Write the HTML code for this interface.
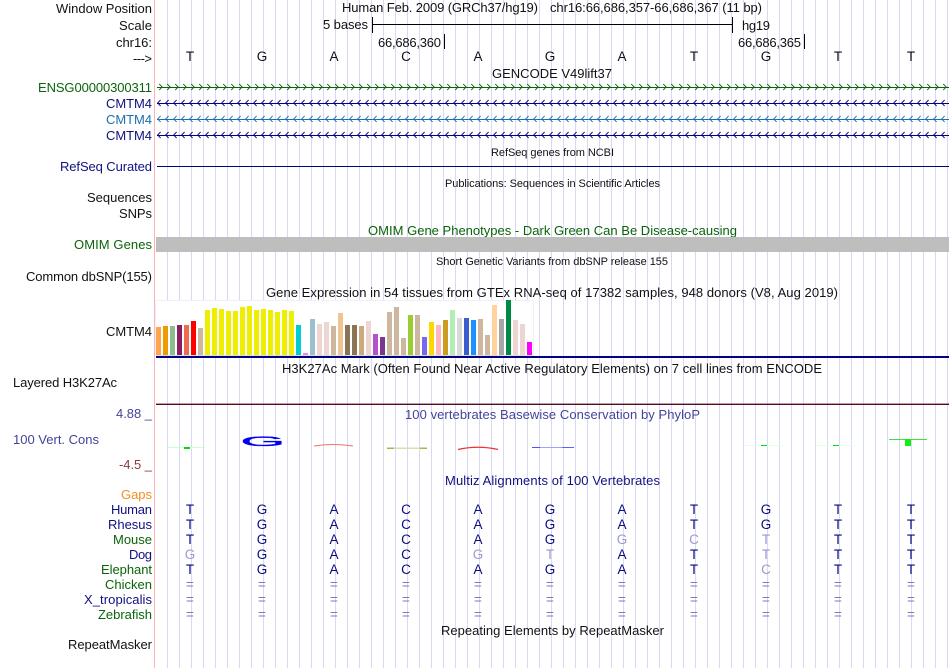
<!DOCTYPE html>
<html><head><meta charset="utf-8"><style>
html,body{margin:0;padding:0;background:#fff;width:950px;height:668px;overflow:hidden}
svg{display:block;font-family:"Liberation Sans",sans-serif;font-size:13px;fill:#111}
.e{text-anchor:end}
.m{text-anchor:middle;font-size:13.5px;fill:#111}
.n{fill:#101080}.g{fill:#0a640a}
.s{font-size:11px}
.b{text-anchor:middle;font-size:13.5px;fill:#0a0a80}
.l{text-anchor:middle;font-size:13.5px;fill:#9a9ac8}
.q{text-anchor:middle;font-size:13.5px;fill:#7a7ab8}
</style></head><body>
<svg xmlns="http://www.w3.org/2000/svg" width="950" height="668" viewBox="0 0 950 668">
<defs>
<pattern id="grid" patternUnits="userSpaceOnUse" x="155" y="0" width="12" height="10"><rect x="0" width="1" height="10" fill="#d8d8f8"/></pattern>
<pattern id="ar" patternUnits="userSpaceOnUse" x="159" y="83" width="8" height="8"><path d="M0.2 1L3.2 4L0.2 7" fill="none" stroke="#0a640a" stroke-width="0.9"/></pattern>
<pattern id="al1" patternUnits="userSpaceOnUse" x="157" y="99" width="8" height="8"><path d="M3.6 1L0.6 4L3.6 7" fill="none" stroke="#000080" stroke-width="0.9"/></pattern>
<pattern id="al2" patternUnits="userSpaceOnUse" x="157" y="115" width="8" height="8"><path d="M3.6 1L0.6 4L3.6 7" fill="none" stroke="#1a6fb0" stroke-width="0.9"/></pattern>
<pattern id="al3" patternUnits="userSpaceOnUse" x="157" y="131" width="8" height="8"><path d="M3.6 1L0.6 4L3.6 7" fill="none" stroke="#000080" stroke-width="0.9"/></pattern>
</defs>
<rect width="950" height="668" fill="#fff"/>
<rect x="167" y="0" width="783" height="668" fill="url(#grid)"/>
<rect x="154" y="0" width="1" height="668" fill="#ffb4b4"/>

<!-- left labels -->
<text x="152" y="13" class="e" textLength="96">Window Position</text>
<text x="152" y="30" class="e" textLength="33">Scale</text>
<text x="152" y="47" class="e" textLength="36">chr16:</text>
<text x="152" y="63" class="e" textLength="19">---&gt;</text>
<text x="152" y="92" class="e g" textLength="114">ENSG00000300311</text>
<text x="152" y="108" class="e n" textLength="46">CMTM4</text>
<text x="152" y="124" class="e" style="fill:#1a6fb0" textLength="46">CMTM4</text>
<text x="152" y="140" class="e n" textLength="46">CMTM4</text>
<text x="152" y="171" class="e n" textLength="92">RefSeq Curated</text>
<text x="152" y="202" class="e" textLength="65">Sequences</text>
<text x="152" y="218" class="e" textLength="33">SNPs</text>
<text x="152" y="249" class="e g" textLength="78">OMIM Genes</text>
<text x="152" y="281" class="e" textLength="126">Common dbSNP(155)</text>
<text x="152" y="336" class="e" textLength="46">CMTM4</text>
<text x="13" y="387" textLength="104">Layered H3K27Ac</text>
<text x="152" y="418" class="e" style="fill:#44449a" textLength="36">4.88 _</text>
<text x="13" y="444" style="fill:#44449a" textLength="86">100 Vert. Cons</text>
<text x="152" y="469" class="e" style="fill:#8a3a3a" textLength="33">-4.5 _</text>
<text x="152" y="499" class="e" style="fill:#f09020" textLength="31">Gaps</text>
<text x="152" y="514" class="e n" textLength="41">Human</text>
<text x="152" y="529" class="e n" textLength="44">Rhesus</text>
<text x="152" y="544" class="e g" textLength="39">Mouse</text>
<text x="152" y="559" class="e n" textLength="23">Dog</text>
<text x="152" y="574" class="e g" textLength="51">Elephant</text>
<text x="152" y="589" class="e g" textLength="47">Chicken</text>
<text x="152" y="604" class="e n" textLength="68">X_tropicalis</text>
<text x="152" y="619" class="e g" textLength="54">Zebrafish</text>
<text x="152" y="649" class="e" textLength="84">RepeatMasker</text>

<!-- header -->
<text x="342" y="12" textLength="196">Human Feb. 2009 (GRCh37/hg19)</text>
<text x="550" y="12" textLength="212">chr16:66,686,357-66,686,367 (11 bp)</text>
<text x="323" y="29" textLength="45">5 bases</text>
<rect x="372" y="17" width="1" height="16" fill="#000"/>
<rect x="372" y="24" width="361" height="1" fill="#000"/>
<rect x="732" y="17" width="1" height="16" fill="#000"/>
<text x="742" y="30" textLength="28">hg19</text>
<text x="378" y="47" textLength="63">66,686,360</text>
<rect x="444" y="34" width="1" height="15" fill="#000"/>
<text x="738" y="47" textLength="63">66,686,365</text>
<rect x="804" y="34" width="1" height="15" fill="#000"/>

<text class="m" x="190" y="61">T</text><text class="m" x="262" y="61">G</text><text class="m" x="334" y="61">A</text><text class="m" x="406" y="61">C</text><text class="m" x="478" y="61">A</text><text class="m" x="550" y="61">G</text><text class="m" x="622" y="61">A</text><text class="m" x="694" y="61">T</text><text class="m" x="766" y="61">G</text><text class="m" x="838" y="61">T</text><text class="m" x="911" y="61">T</text>

<text x="492" y="78" textLength="120">GENCODE V49lift37</text>

<!-- genes -->
<rect x="157" y="87" width="792" height="1" fill="#0a640a"/><rect x="159" y="83" width="790" height="8" fill="url(#ar)"/>
<rect x="157" y="103" width="792" height="1" fill="#000080"/><rect x="157" y="99" width="792" height="8" fill="url(#al1)"/>
<rect x="157" y="119" width="792" height="1" fill="#1a6fb0"/><rect x="157" y="115" width="792" height="8" fill="url(#al2)"/>
<rect x="157" y="135" width="792" height="1" fill="#000080"/><rect x="157" y="131" width="792" height="8" fill="url(#al3)"/>

<text x="491" y="156" class="s" textLength="123">RefSeq genes from NCBI</text>
<rect x="157" y="166" width="792" height="1" fill="#000080"/>
<text x="445" y="187" class="s" textLength="215">Publications: Sequences in Scientific Articles</text>
<text x="368" y="235" class="g" textLength="369">OMIM Gene Phenotypes - Dark Green Can Be Disease-causing</text>
<rect x="156" y="237" width="793" height="15" fill="#bebebe"/>
<text x="436" y="265" class="s" textLength="232">Short Genetic Variants from dbSNP release 155</text>
<text x="266" y="297" textLength="572">Gene Expression in 54 tissues from GTEx RNA-seq of 17382 samples, 948 donors (V8, Aug 2019)</text>

<!-- GTEx -->
<rect x="155.5" y="300.5" width="378" height="55" fill="#fff" stroke="#f0f0f8"/>
<g>
<rect x="156" y="327" width="5" height="28" fill="#FFA54F"/>
<rect x="163" y="326" width="5" height="29" fill="#EE9A00"/>
<rect x="170" y="326" width="5" height="29" fill="#8FBC8F"/>
<rect x="177" y="325" width="5" height="30" fill="#8B1C62"/>
<rect x="184" y="325" width="5" height="30" fill="#EE6A50"/>
<rect x="191" y="321" width="5" height="34" fill="#FF0000"/>
<rect x="198" y="328" width="5" height="27" fill="#CDB79E"/>
<rect x="205" y="310" width="5" height="45" fill="#EEEE00"/>
<rect x="212" y="308" width="5" height="47" fill="#EEEE00"/>
<rect x="219" y="309" width="5" height="46" fill="#EEEE00"/>
<rect x="226" y="311" width="5" height="44" fill="#EEEE00"/>
<rect x="233" y="311" width="5" height="44" fill="#EEEE00"/>
<rect x="240" y="307" width="5" height="48" fill="#EEEE00"/>
<rect x="247" y="306" width="5" height="49" fill="#EEEE00"/>
<rect x="254" y="310" width="5" height="45" fill="#EEEE00"/>
<rect x="261" y="309" width="5" height="46" fill="#EEEE00"/>
<rect x="268" y="310" width="5" height="45" fill="#EEEE00"/>
<rect x="275" y="312" width="5" height="43" fill="#EEEE00"/>
<rect x="282" y="310" width="5" height="45" fill="#EEEE00"/>
<rect x="289" y="311" width="5" height="44" fill="#EEEE00"/>
<rect x="296" y="325" width="5" height="30" fill="#00CDCD"/>
<rect x="303" y="353" width="5" height="2" fill="#EE82EE"/>
<rect x="310" y="319" width="5" height="36" fill="#9AC0CD"/>
<rect x="317" y="324" width="5" height="31" fill="#EED5D2"/>
<rect x="324" y="322" width="5" height="33" fill="#EED5D2"/>
<rect x="331" y="326" width="5" height="29" fill="#CDB79E"/>
<rect x="338" y="313" width="5" height="42" fill="#EEC591"/>
<rect x="345" y="325" width="5" height="30" fill="#8B7355"/>
<rect x="352" y="325" width="5" height="30" fill="#8B7355"/>
<rect x="359" y="326" width="5" height="29" fill="#CDAA7D"/>
<rect x="366" y="321" width="5" height="34" fill="#EED5D2"/>
<rect x="373" y="334" width="5" height="21" fill="#B452CD"/>
<rect x="380" y="337" width="5" height="18" fill="#7A378B"/>
<rect x="387" y="312" width="5" height="43" fill="#CDB79E"/>
<rect x="394" y="307" width="5" height="48" fill="#CDB79E"/>
<rect x="401" y="338" width="5" height="17" fill="#CDB79E"/>
<rect x="408" y="315" width="5" height="40" fill="#9ACD32"/>
<rect x="415" y="315" width="5" height="40" fill="#CDB79E"/>
<rect x="422" y="337" width="5" height="18" fill="#7A67EE"/>
<rect x="429" y="322" width="5" height="33" fill="#FFD700"/>
<rect x="436" y="325" width="5" height="30" fill="#FFB6C1"/>
<rect x="443" y="320" width="5" height="35" fill="#CD9B1D"/>
<rect x="450" y="310" width="5" height="45" fill="#B4EEB4"/>
<rect x="457" y="318" width="5" height="37" fill="#D9D9D9"/>
<rect x="464" y="318" width="5" height="37" fill="#3A5FCD"/>
<rect x="471" y="320" width="5" height="35" fill="#1E90FF"/>
<rect x="478" y="319" width="5" height="36" fill="#CDB79E"/>
<rect x="485" y="335" width="5" height="20" fill="#CDB79E"/>
<rect x="492" y="305" width="5" height="50" fill="#FFD39B"/>
<rect x="499" y="319" width="5" height="36" fill="#A6A6A6"/>
<rect x="506" y="300" width="5" height="55" fill="#008B45"/>
<rect x="513" y="320" width="5" height="35" fill="#EED5D2"/>
<rect x="520" y="324" width="5" height="31" fill="#EED5D2"/>
<rect x="527" y="342" width="5" height="13" fill="#FF00FF"/>
</g>
<rect x="156" y="355" width="378" height="1" fill="#ddd"/>
<rect x="156" y="356" width="793" height="2" fill="#000080"/>

<text x="282" y="373" textLength="540">H3K27Ac Mark (Often Found Near Active Regulatory Elements) on 7 cell lines from ENCODE</text>
<rect x="156" y="403.6" width="793" height="1.4" fill="#5a0a20"/>
<text x="405" y="419" style="fill:#44449a" textLength="295">100 vertebrates Basewise Conservation by PhyloP</text>

<!-- conservation logo -->
<rect x="168" y="447" width="37" height="1" fill="#ccffcc"/>
<rect x="184" y="447" width="6" height="2" fill="#00e000"/>
<text transform="translate(240.5,446) scale(4.1,1)" style="font-size:14px;fill:#0000f0;stroke:#0000f0;stroke-width:.35">G</text>
<path d="M314 446Q333 443 353 446" fill="none" stroke="#f07070" stroke-width="1"/>
<rect x="387" y="447.5" width="40" height="1.5" fill="#dcdcb0"/><rect x="387" y="447.5" width="7" height="1.5" fill="#b0b050"/><rect x="420" y="447.5" width="7" height="1.5" fill="#b0b050"/>
<path d="M458 449.5Q478 445 498 449.5" fill="none" stroke="#f03030" stroke-width="1.2"/>
<rect x="532" y="447" width="42" height="1" fill="#a0a0ff"/><rect x="532" y="447" width="8" height="1" fill="#5050ff"/><rect x="562" y="447" width="12" height="1" fill="#6060ff"/>
<rect x="745" y="445" width="38" height="1" fill="#e4ffe4"/><rect x="761" y="445" width="6" height="1" fill="#00e000"/>
<rect x="817" y="445" width="38" height="1" fill="#e4ffe4"/><rect x="833" y="445" width="6" height="1" fill="#00e000"/>
<rect x="889" y="439" width="38" height="1" fill="#40e040"/><rect x="905" y="439" width="6" height="7" fill="#10f010"/>

<text x="445" y="485" class="n" textLength="215">Multiz Alignments of 100 Vertebrates</text>

<!-- multiz -->
<g>
<text class="b" x="190" y="514">T</text><text class="b" x="262" y="514">G</text><text class="b" x="334" y="514">A</text><text class="b" x="406" y="514">C</text><text class="b" x="478" y="514">A</text><text class="b" x="550" y="514">G</text><text class="b" x="622" y="514">A</text><text class="b" x="694" y="514">T</text><text class="b" x="766" y="514">G</text><text class="b" x="838" y="514">T</text><text class="b" x="911" y="514">T</text>
<text class="b" x="190" y="529">T</text><text class="b" x="262" y="529">G</text><text class="b" x="334" y="529">A</text><text class="b" x="406" y="529">C</text><text class="b" x="478" y="529">A</text><text class="b" x="550" y="529">G</text><text class="b" x="622" y="529">A</text><text class="b" x="694" y="529">T</text><text class="b" x="766" y="529">G</text><text class="b" x="838" y="529">T</text><text class="b" x="911" y="529">T</text>
<text class="b" x="190" y="544">T</text><text class="b" x="262" y="544">G</text><text class="b" x="334" y="544">A</text><text class="b" x="406" y="544">C</text><text class="b" x="478" y="544">A</text><text class="b" x="550" y="544">G</text><text class="l" x="622" y="544">G</text><text class="l" x="694" y="544">C</text><text class="l" x="766" y="544">T</text><text class="b" x="838" y="544">T</text><text class="b" x="911" y="544">T</text>
<text class="l" x="190" y="559">G</text><text class="b" x="262" y="559">G</text><text class="b" x="334" y="559">A</text><text class="b" x="406" y="559">C</text><text class="l" x="478" y="559">G</text><text class="l" x="550" y="559">T</text><text class="b" x="622" y="559">A</text><text class="b" x="694" y="559">T</text><text class="l" x="766" y="559">T</text><text class="b" x="838" y="559">T</text><text class="b" x="911" y="559">T</text>
<text class="b" x="190" y="574">T</text><text class="b" x="262" y="574">G</text><text class="b" x="334" y="574">A</text><text class="b" x="406" y="574">C</text><text class="b" x="478" y="574">A</text><text class="b" x="550" y="574">G</text><text class="b" x="622" y="574">A</text><text class="b" x="694" y="574">T</text><text class="l" x="766" y="574">C</text><text class="b" x="838" y="574">T</text><text class="b" x="911" y="574">T</text>
<text class="q" x="190" y="589">=</text><text class="q" x="262" y="589">=</text><text class="q" x="334" y="589">=</text><text class="q" x="406" y="589">=</text><text class="q" x="478" y="589">=</text><text class="q" x="550" y="589">=</text><text class="q" x="622" y="589">=</text><text class="q" x="694" y="589">=</text><text class="q" x="766" y="589">=</text><text class="q" x="838" y="589">=</text><text class="q" x="911" y="589">=</text>
<text class="q" x="190" y="604">=</text><text class="q" x="262" y="604">=</text><text class="q" x="334" y="604">=</text><text class="q" x="406" y="604">=</text><text class="q" x="478" y="604">=</text><text class="q" x="550" y="604">=</text><text class="q" x="622" y="604">=</text><text class="q" x="694" y="604">=</text><text class="q" x="766" y="604">=</text><text class="q" x="838" y="604">=</text><text class="q" x="911" y="604">=</text>
<text class="q" x="190" y="619">=</text><text class="q" x="262" y="619">=</text><text class="q" x="334" y="619">=</text><text class="q" x="406" y="619">=</text><text class="q" x="478" y="619">=</text><text class="q" x="550" y="619">=</text><text class="q" x="622" y="619">=</text><text class="q" x="694" y="619">=</text><text class="q" x="766" y="619">=</text><text class="q" x="838" y="619">=</text><text class="q" x="911" y="619">=</text>
</g>
<text x="441" y="635" textLength="223">Repeating Elements by RepeatMasker</text>
</svg>
</body></html>
